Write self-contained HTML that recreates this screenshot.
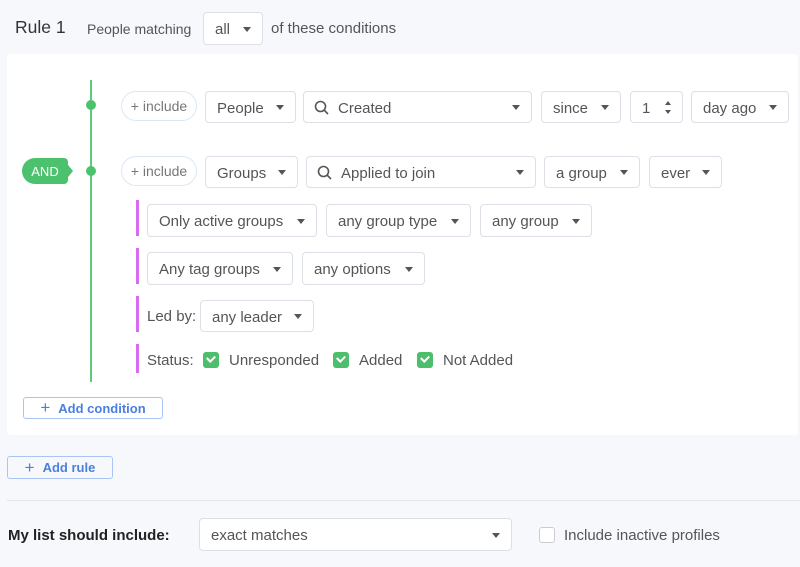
<!DOCTYPE html>
<html><head><style>
*{box-sizing:border-box;margin:0;padding:0}
body{width:800px;height:567px;background:#f7f8fc;font-family:"Liberation Sans",sans-serif;color:#555;position:relative;overflow:hidden}
.a{position:absolute}
.t{position:absolute;font-size:15px;color:#555;white-space:nowrap}
.s{position:absolute;background:#fff;border:1px solid #dcdfe6;border-radius:4px;font-size:15px;color:#555;padding-left:11px;padding-top:2px;display:flex;align-items:center;white-space:nowrap}
.s .c{position:absolute;right:11px;top:50%;margin-top:-2px;width:0;height:0;border-left:4px solid transparent;border-right:4px solid transparent;border-top:5px solid #555}
.pill{position:absolute;background:#fff;border:1px solid #dbe7f7;border-radius:16px;font-size:14px;color:#777;display:flex;align-items:center;justify-content:center}
.pb{position:absolute;left:136px;width:3px;background:#d86bf0}
.cb{position:absolute;width:16px;height:16px;border-radius:3px;background:#4cbe6c}
.cb:after{content:"";position:absolute;left:4px;top:3px;width:6px;height:4px;border-left:2px solid #fff;border-bottom:2px solid #fff;transform:rotate(-45deg)}
.btn{position:absolute;border:1px solid #a9c4f5;border-radius:3px;background:#fff;color:#4a7fe0;font-size:13px;font-weight:bold;display:flex;align-items:center;justify-content:center}
</style></head><body>
<div class="t" style="left:15px;top:17px;font-size:17.5px;color:#333">Rule 1</div>
<div class="t" style="left:87px;top:21px;font-size:14px">People matching</div>
<div class="s" style="left:203px;top:12px;width:60px;height:33px">all<span class="c"></span></div>
<div class="t" style="left:271px;top:20px">of these conditions</div>

<div class="a" style="left:7px;top:54px;width:791px;height:381px;background:#fff;border-radius:3px"></div>
<div class="a" style="left:90px;top:80px;width:2px;height:302px;background:#5ccc78"></div>
<div class="a" style="left:86px;top:100px;width:10px;height:10px;border-radius:50%;background:#4cc26e"></div>
<div class="a" style="left:86px;top:166px;width:10px;height:10px;border-radius:50%;background:#4cc26e"></div>
<div class="a" style="left:22px;top:158px;width:46px;height:26px;background:#4cc26e;border-radius:13px 4px 4px 13px;color:#fff;font-size:13px;display:flex;align-items:center;justify-content:center">AND</div>
<div class="a" style="left:64px;top:160px;width:0;height:0;border-top:11px solid transparent;border-bottom:11px solid transparent;border-left:9px solid #4cc26e"></div>

<div class="pill" style="left:121px;top:91px;width:76px;height:30px">+ include</div>
<div class="s" style="left:205px;top:91px;width:91px;height:32px">People<span class="c"></span></div>
<div class="s" style="left:303px;top:91px;width:229px;height:32px;padding-left:34px">Created<span class="c"></span>
<svg class="a" style="left:10px;top:8px" width="16" height="16" viewBox="0 0 16 16"><circle cx="6.5" cy="6.5" r="5" fill="none" stroke="#555" stroke-width="1.6"/><path d="M10.2 10.2L14 14" stroke="#555" stroke-width="1.6"/></svg></div>
<div class="s" style="left:541px;top:91px;width:80px;height:32px">since<span class="c"></span></div>
<div class="s" style="left:630px;top:91px;width:53px;height:32px">1
<span class="a" style="right:11px;top:9px;border-left:3px solid transparent;border-right:3px solid transparent;border-bottom:4px solid #555"></span>
<span class="a" style="right:11px;top:18px;border-left:3px solid transparent;border-right:3px solid transparent;border-top:4px solid #555"></span></div>
<div class="s" style="left:691px;top:91px;width:98px;height:32px">day ago<span class="c"></span></div>

<div class="pill" style="left:121px;top:156px;width:76px;height:30px">+ include</div>
<div class="s" style="left:205px;top:156px;width:93px;height:32px">Groups<span class="c"></span></div>
<div class="s" style="left:306px;top:156px;width:230px;height:32px;padding-left:34px">Applied to join<span class="c"></span>
<svg class="a" style="left:10px;top:8px" width="16" height="16" viewBox="0 0 16 16"><circle cx="6.5" cy="6.5" r="5" fill="none" stroke="#555" stroke-width="1.6"/><path d="M10.2 10.2L14 14" stroke="#555" stroke-width="1.6"/></svg></div>
<div class="s" style="left:544px;top:156px;width:96px;height:32px">a group<span class="c"></span></div>
<div class="s" style="left:649px;top:156px;width:73px;height:32px">ever<span class="c"></span></div>

<div class="pb" style="top:200px;height:36px"></div>
<div class="pb" style="top:248px;height:36px"></div>
<div class="pb" style="top:296px;height:36px"></div>
<div class="pb" style="top:344px;height:29px"></div>

<div class="s" style="left:147px;top:204px;width:170px;height:33px">Only active groups<span class="c"></span></div>
<div class="s" style="left:326px;top:204px;width:145px;height:33px">any group type<span class="c"></span></div>
<div class="s" style="left:480px;top:204px;width:112px;height:33px">any group<span class="c"></span></div>
<div class="s" style="left:147px;top:252px;width:146px;height:33px">Any tag groups<span class="c"></span></div>
<div class="s" style="left:302px;top:252px;width:123px;height:33px">any options<span class="c"></span></div>
<div class="t" style="left:147px;top:308px">Led by:</div>
<div class="s" style="left:200px;top:300px;width:114px;height:32px">any leader<span class="c"></span></div>
<div class="t" style="left:147px;top:352px">Status:</div>
<div class="cb" style="left:203px;top:352px"></div><div class="t" style="left:229px;top:352px">Unresponded</div>
<div class="cb" style="left:333px;top:352px"></div><div class="t" style="left:359px;top:352px">Added</div>
<div class="cb" style="left:417px;top:352px"></div><div class="t" style="left:443px;top:352px">Not Added</div>

<div class="btn" style="left:23px;top:397px;width:140px;height:22px"><span style="font-size:17px;font-weight:normal;margin-right:8px">+</span>Add condition</div>
<div class="btn" style="left:7px;top:456px;width:106px;height:23px;background:#f7f8fc"><span style="font-size:17px;font-weight:normal;margin-right:8px">+</span>Add rule</div>
<div class="a" style="left:7px;top:500px;width:793px;height:1px;background:#e3e5ea"></div>
<div class="t" style="left:8px;top:527px;font-weight:bold;color:#222">My list should include:</div>
<div class="s" style="left:199px;top:518px;width:313px;height:33px">exact matches<span class="c"></span></div>
<div class="a" style="left:539px;top:527px;width:16px;height:16px;border:1px solid #ccc;border-radius:3px;background:#fff"></div>
<div class="t" style="left:564px;top:527px">Include inactive profiles</div>
</body></html>
